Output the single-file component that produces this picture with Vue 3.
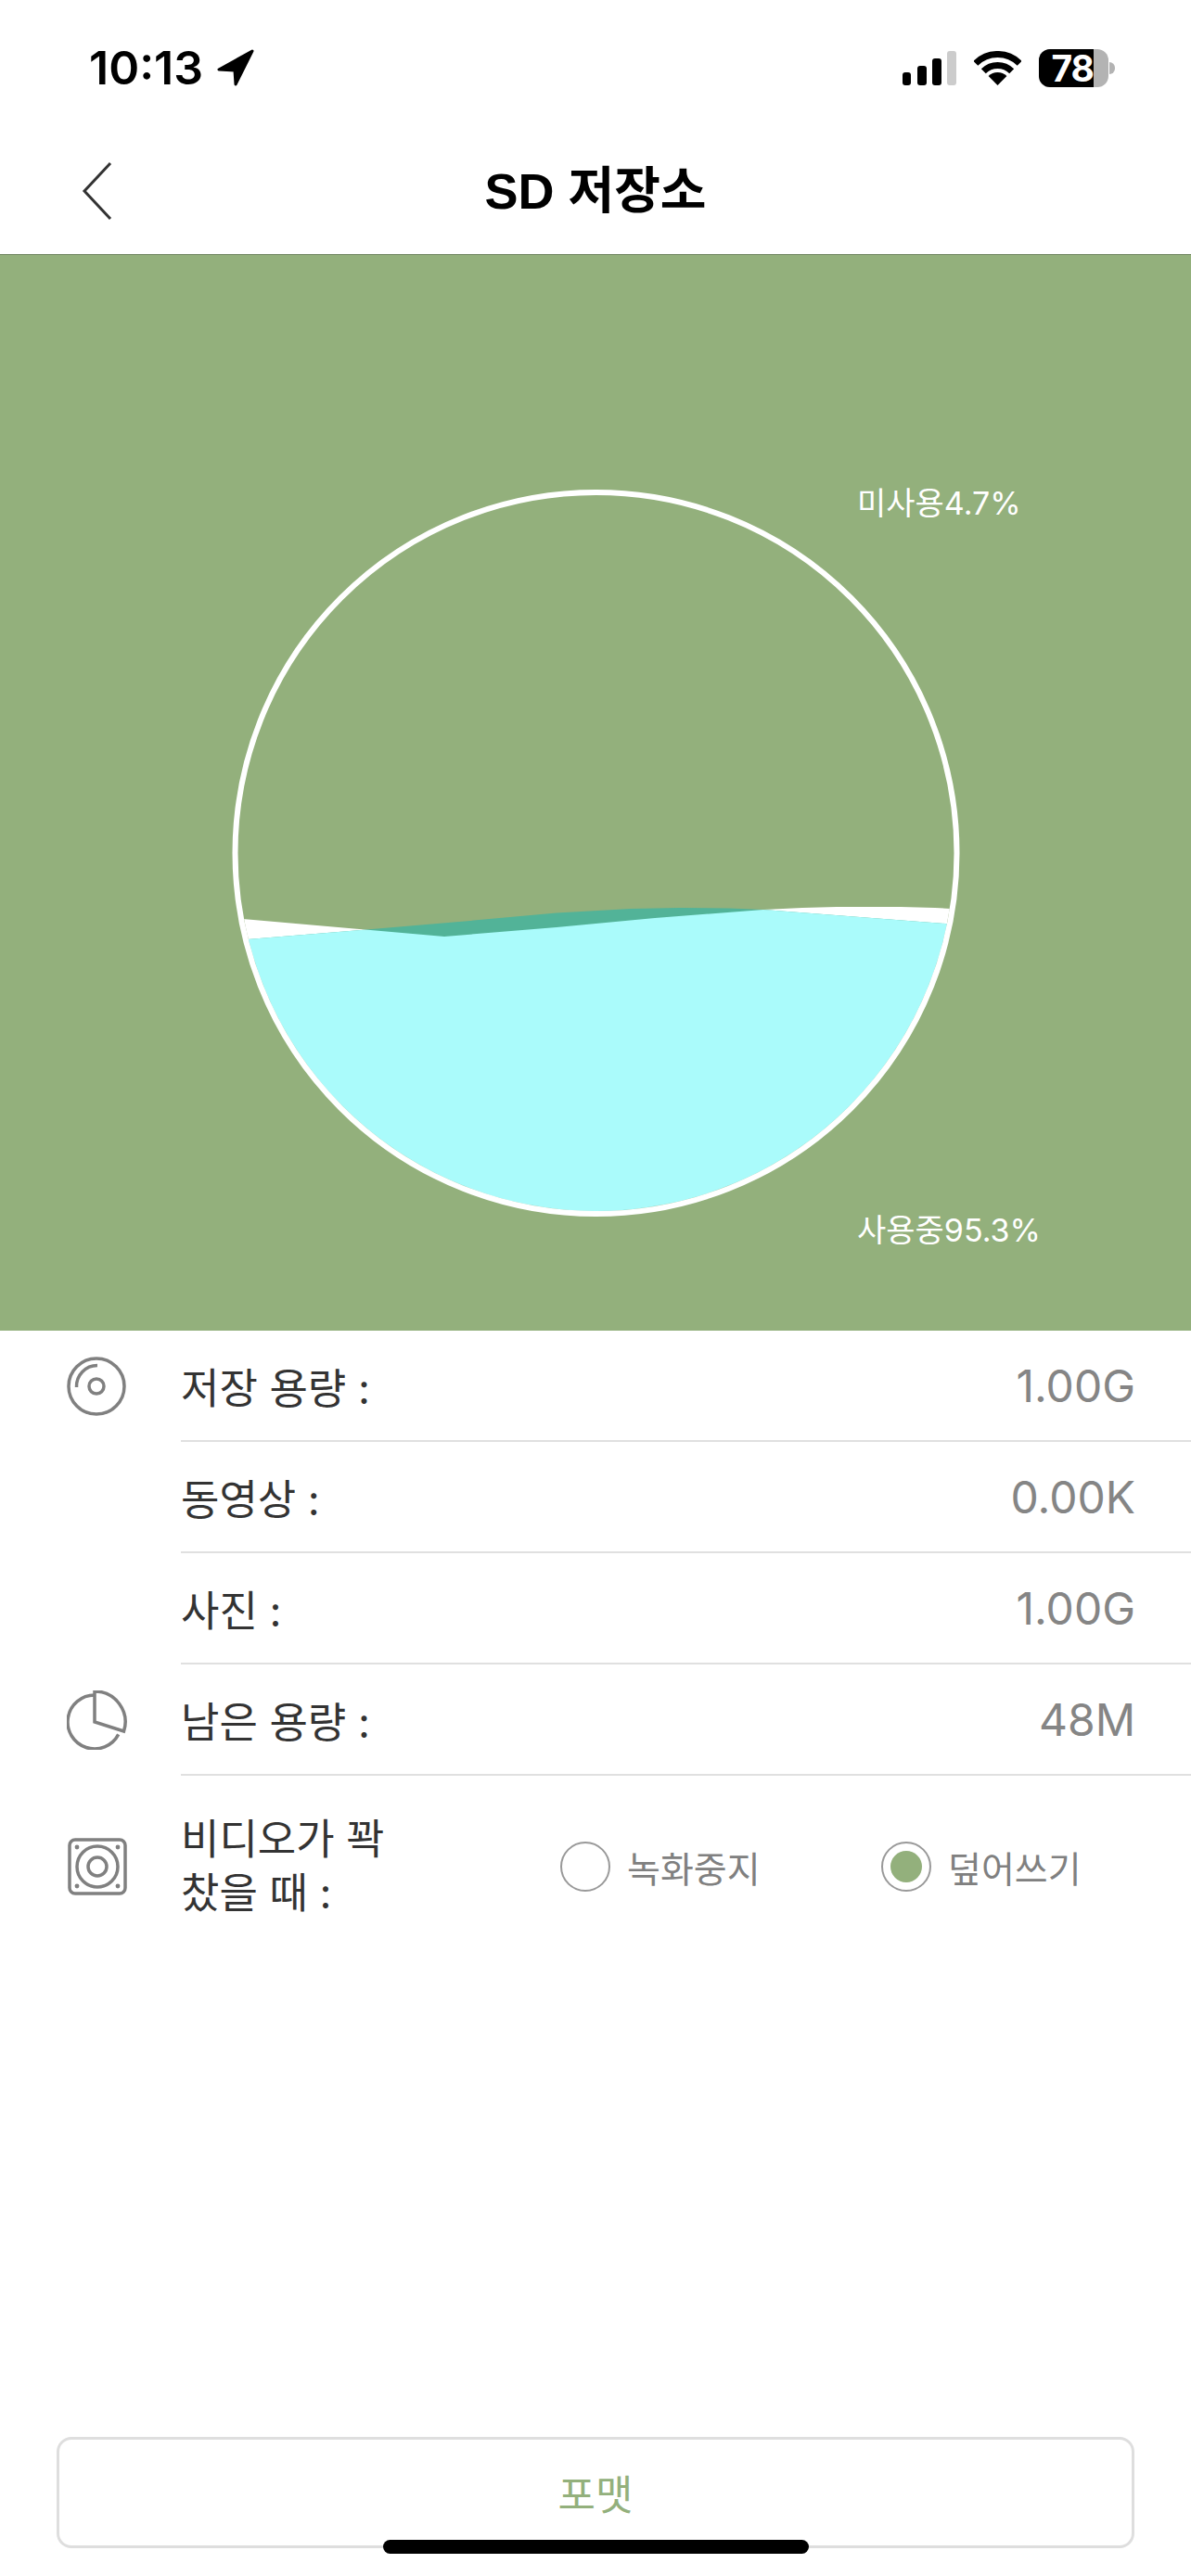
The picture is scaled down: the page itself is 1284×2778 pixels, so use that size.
<script setup>
const rows = [
  { label: '저장 용량 :', value: '1.00G', icon: 'disc' },
  { label: '동영상 :', value: '0.00K', icon: '' },
  { label: '사진 :', value: '1.00G', icon: '' },
  { label: '남은 용량 :', value: '48M', icon: 'pie' },
];

// top edges of the two waves, read off as x/y pairs
const backEdge = [
  [240, 988], [479, 1009], [600, 999], [706, 989], [823, 980], [865, 978],
  [902, 977], [971, 977], [1008, 978], [1044, 980],
];
const frontEdge = [
  [240, 1014], [267, 1012], [389, 1002], [495, 993], [600, 983.5], [680, 979],
  [733, 978], [786, 978.5], [823, 980], [1044, 997],
];

const wavePath = (points) => {
  const edge = points.map(([x, y]) => `${x} ${y}`).join(' L');
  return `M${edge} L1044 1320 L240 1320 Z`;
};

const backWave = wavePath(backEdge);
const frontWave = wavePath(frontEdge);
</script>

<template>
  <div class="page">
    <div class="status-bar">
      <div class="status-left">
        <span class="time">10:13</span>
        <svg class="arrow" width="40" height="40" viewBox="0 0 40 40">
          <path d="M38 2 L2 22 L19 23 L20 38 Z" fill="#000" stroke="#000" stroke-width="3" stroke-linejoin="round" />
        </svg>
      </div>
      <div class="status-right">
        <svg width="58" height="37" viewBox="0 0 58 37">
          <rect x="0" y="23" width="9" height="14" rx="3" fill="#000" />
          <rect x="16" y="16" width="10" height="21" rx="3" fill="#000" />
          <rect x="32" y="8" width="10" height="29" rx="3" fill="#000" />
          <rect x="48" y="0" width="10" height="37" rx="3" fill="#ccc" />
        </svg>
        <svg class="wifi" width="51" height="37" viewBox="0 0 51 37">
          <path d="M1.8 13.3 A33.5 33.5 0 0 1 49.2 13.3" fill="none" stroke="#000" stroke-width="7" />
          <path d="M10.3 21.8 A21.5 21.5 0 0 1 40.7 21.8" fill="none" stroke="#000" stroke-width="7" />
          <path d="M25.5 37 L15.6 27.1 A14 14 0 0 1 35.4 27.1 Z" fill="#000" />
        </svg>
        <div class="battery">
          <div class="battery-body">
            <div class="battery-level"><span>78</span></div>
          </div>
          <div class="battery-nub"></div>
        </div>
      </div>
    </div>

    <div class="nav-bar">
      <svg class="back" width="34" height="64" viewBox="0 0 34 64">
        <path d="M31 2 L3 32 L31 62" fill="none" stroke="#333" stroke-width="3" />
      </svg>
      <h1 class="title">SD 저장소</h1>
    </div>

    <div class="chart">
      <svg width="1284" height="1160" viewBox="0 274 1284 1160">
        <defs>
          <clipPath id="inside">
            <circle cx="642.5" cy="919" r="386" />
          </clipPath>
          <clipPath id="back-clip">
            <path :d="backWave" />
          </clipPath>
        </defs>
        <g clip-path="url(#inside)">
          <path :d="backWave" fill="#fff" />
          <path :d="frontWave" fill="#52b398" />
          <g clip-path="url(#back-clip)">
            <path :d="frontWave" fill="#aafbfb" />
          </g>
        </g>
        <circle cx="642.5" cy="919" r="389" fill="none" stroke="#fff" stroke-width="6" />
      </svg>
      <span class="chart-label free">미사용4.7%</span>
      <span class="chart-label used">사용중95.3%</span>
    </div>

    <div class="info">
      <div v-for="row in rows" :key="row.label" class="row">
        <div class="row-icon">
          <svg v-if="row.icon === 'disc'" width="66" height="64" viewBox="0 0 66 64">
            <circle cx="32" cy="32" r="30" class="line" />
            <circle cx="32" cy="32" r="8" class="line" />
            <path d="M10.5 33 A22.5 22.5 0 0 1 33 9.5" class="line" />
          </svg>
          <svg v-else-if="row.icon === 'pie'" width="66" height="64" viewBox="0 0 66 64">
            <path d="M30 5 A29 29 0 1 0 55.7 47.4" class="line" />
            <path d="M30 34 V1 A33 33 0 0 1 61.5 44 Z" class="line" />
          </svg>
        </div>
        <div class="row-body">
          <span class="row-label">{{ row.label }}</span>
          <span class="row-value">{{ row.value }}</span>
        </div>
      </div>

      <div class="row row-full">
        <div class="row-icon">
          <svg width="66" height="64" viewBox="0 0 66 64">
            <rect x="3" y="3" width="60" height="58" rx="6" class="line" />
            <circle cx="33" cy="32" r="22" class="line" />
            <circle cx="33" cy="32" r="10" class="line" />
            <circle cx="11" cy="11" r="2.4" fill="#808080" />
            <circle cx="55" cy="11" r="2.4" fill="#808080" />
            <circle cx="11" cy="53" r="2.4" fill="#808080" />
            <circle cx="55" cy="53" r="2.4" fill="#808080" />
          </svg>
        </div>
        <div class="full-body">
          <span class="full-label">비디오가 꽉<br />찼을 때 :</span>
          <label class="radio">
            <span class="radio-mark"></span>
            <span>녹화중지</span>
          </label>
          <label class="radio radio-on">
            <span class="radio-mark"></span>
            <span>덮어쓰기</span>
          </label>
        </div>
      </div>
    </div>

    <div class="footer">
      <button class="format-btn" type="button">포맷</button>
    </div>
    <div class="home-bar"></div>
  </div>
</template>

<style scoped>
.page {
  position: relative;
  display: flex;
  flex-direction: column;
  width: 1284px;
  height: 2778px;
  overflow: hidden;
  background: #fff;
  font-family: Inter, "Noto Sans CJK KR", sans-serif;
}

.status-bar {
  display: flex;
  align-items: center;
  justify-content: space-between;
  height: 146px;
  padding: 0 82px 0 96px;
  box-sizing: border-box;
}

.status-left {
  display: flex;
  align-items: center;
  gap: 15px;
}

.time {
  font-size: 50px;
  font-weight: 600;
  color: #000;
}

.status-right {
  display: flex;
  align-items: center;
  gap: 19px;
}

.battery {
  display: flex;
  align-items: center;
  gap: 1px;
}

.battery-body {
  width: 75px;
  height: 41px;
  border-radius: 12px;
  background: #b3b3b3;
}

.battery-level {
  display: flex;
  align-items: center;
  justify-content: flex-end;
  width: 59px;
  height: 100%;
  border-radius: 12px 0 0 12px;
  background: #000;
  color: #fff;
  font-size: 39px;
  font-weight: 700;
  line-height: 1;
  letter-spacing: -1px;
}

.battery-nub {
  width: 6px;
  height: 13px;
  border-radius: 0 6px 6px 0;
  background: #b3b3b3;
}

.nav-bar {
  position: relative;
  display: flex;
  align-items: center;
  justify-content: center;
  height: 129px;
  border-bottom: 1px solid #6f8560;
  box-sizing: border-box;
  padding-bottom: 18px;
}

.back {
  position: absolute;
  left: 88px;
  top: 28px;
}

.title {
  margin: 0;
  font-family: "Liberation Sans", "Noto Sans CJK KR", sans-serif;
  font-size: 54px;
  font-weight: 700;
  color: #000;
}

.chart {
  position: relative;
  height: 1160px;
  background: #93b07c;
}

.chart svg {
  display: block;
}

.chart-label {
  position: absolute;
  left: 924px;
  font-size: 34px;
  line-height: 40px;
  color: #fff;
}

.free {
  top: 248px;
}

.used {
  top: 1032px;
}

.line {
  fill: none;
  stroke: #808080;
  stroke-width: 3.5;
}

.row {
  display: flex;
  height: 120px;
}

.row-icon {
  flex: none;
  display: flex;
  align-items: center;
  width: 195px;
  padding-left: 72px;
  box-sizing: border-box;
}

.row-icon svg {
  display: block;
}

.row-body {
  flex: 1;
  display: flex;
  align-items: center;
  justify-content: space-between;
  padding-right: 60px;
  border-bottom: 2px solid #e0e0e0;
}

.row-label {
  font-size: 45px;
  color: #333;
}

.row-value {
  font-size: 48px;
  color: #858585;
}

.row-full {
  height: 196px;
}

.full-body {
  flex: 1;
  display: flex;
  align-items: center;
}

.full-label {
  flex: none;
  width: 409px;
  font-size: 45px;
  line-height: 58px;
  color: #333;
}

.radio {
  display: flex;
  align-items: center;
  gap: 18px;
  width: 346px;
  font-size: 39px;
  color: #808080;
}

.radio-mark {
  display: flex;
  align-items: center;
  justify-content: center;
  width: 54px;
  height: 54px;
  border: 2px solid #999;
  border-radius: 50%;
  box-sizing: border-box;
}

.radio-on .radio-mark::after {
  content: "";
  width: 34px;
  height: 34px;
  border-radius: 50%;
  background: #93b07c;
}

.footer {
  margin-top: auto;
  padding: 0 61px 30px;
}

.format-btn {
  display: block;
  width: 100%;
  height: 120px;
  border: 3px solid #dedede;
  border-radius: 16px;
  background: #fff;
  font-family: inherit;
  font-size: 44px;
  color: #93b07c;
}

.home-bar {
  position: absolute;
  left: 413px;
  top: 2739px;
  width: 459px;
  height: 15px;
  border-radius: 8px;
  background: #000;
}
</style>
